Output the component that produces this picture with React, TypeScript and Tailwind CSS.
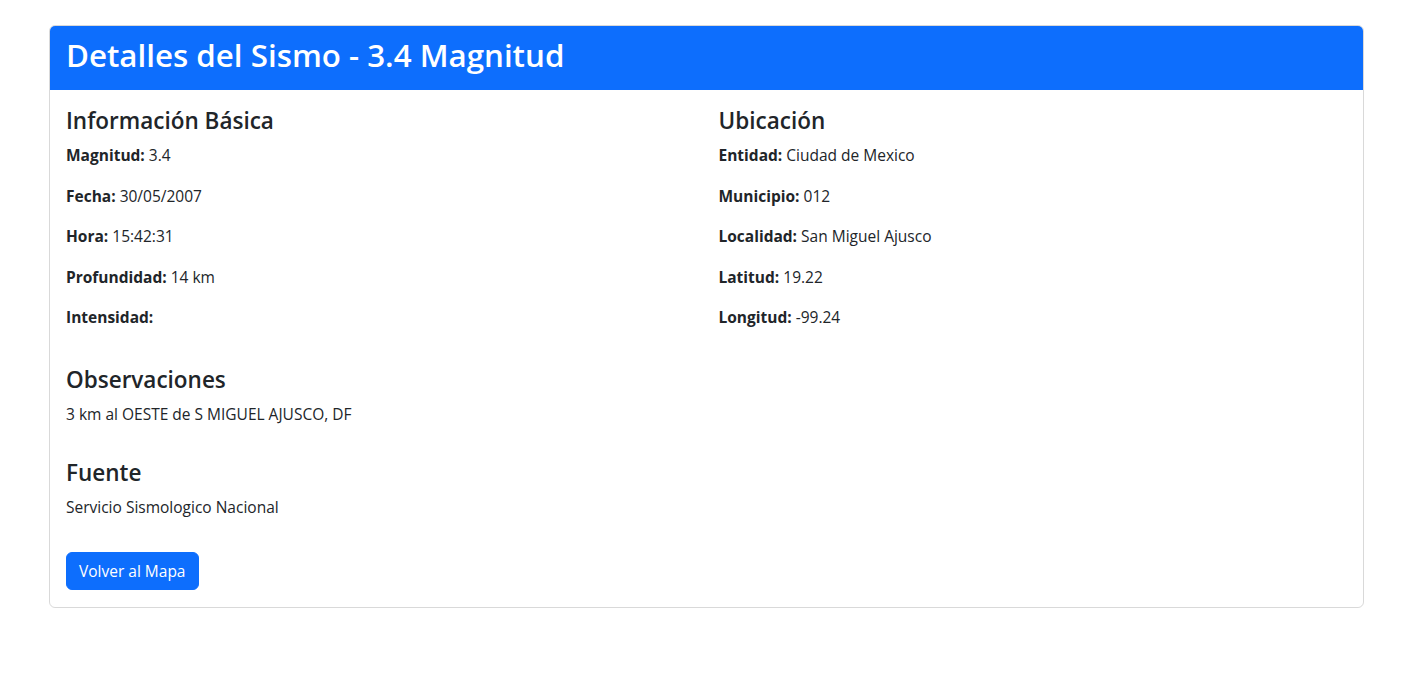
const basic = [
  ["Magnitud:", "3.4"],
  ["Fecha:", "30/05/2007"],
  ["Hora:", "15:42:31"],
  ["Profundidad:", "14 km"],
  ["Intensidad:", ""],
];

const location = [
  ["Entidad:", "Ciudad de Mexico"],
  ["Municipio:", "012"],
  ["Localidad:", "San Miguel Ajusco"],
  ["Latitud:", "19.22"],
  ["Longitud:", "-99.24"],
];

const Field = ({ label, value }: { label: string; value: string }) => (
  <p className="mb-[16.5px] leading-6">
    <strong className="font-bold">{label}</strong> {value}
  </p>
);

export default function App() {
  return (
    <div className="min-h-screen bg-white text-[#212529] text-[15.5px] font-['Open_Sans',sans-serif]">
      <div className="pt-[25px] pl-[49px] w-[1364px]">
        <div className="border border-black/15 rounded-md overflow-hidden">
          <div className="bg-[#0d6efd] px-4 pt-[10px] pb-[16px]">
            <h2 className="text-white text-[31.3px] font-semibold leading-[38px]">
              Detalles del Sismo - 3.4 Magnitud
            </h2>
          </div>
          <div className="px-4 pt-4 pb-[17px]">
            <div className="grid grid-cols-2 gap-x-6">
              <div>
                <h4 className="text-[22.5px] font-semibold leading-[29px] mb-2">Información Básica</h4>
                {basic.map(([l, v]) => (
                  <Field key={l} label={l} value={v} />
                ))}
              </div>
              <div>
                <h4 className="text-[22.5px] font-semibold leading-[29px] mb-2">Ubicación</h4>
                {location.map(([l, v]) => (
                  <Field key={l} label={l} value={v} />
                ))}
              </div>
            </div>
            <h4 className="text-[22.5px] font-semibold leading-[29px] mb-2 mt-[19px]">Observaciones</h4>
            <p className="mb-4 leading-6">3 km al OESTE de S MIGUEL AJUSCO, DF</p>
            <h4 className="text-[22.5px] font-semibold leading-[29px] mb-2 mt-8">Fuente</h4>
            <p className="mb-4 leading-6">Servicio Sismologico Nacional</p>
            <button className="mt-[17px] bg-[#0d6efd] text-white rounded-md px-3 py-1.5 leading-6 border border-[#0d6efd]">
              Volver al Mapa
            </button>
          </div>
        </div>
      </div>
    </div>
  );
}
